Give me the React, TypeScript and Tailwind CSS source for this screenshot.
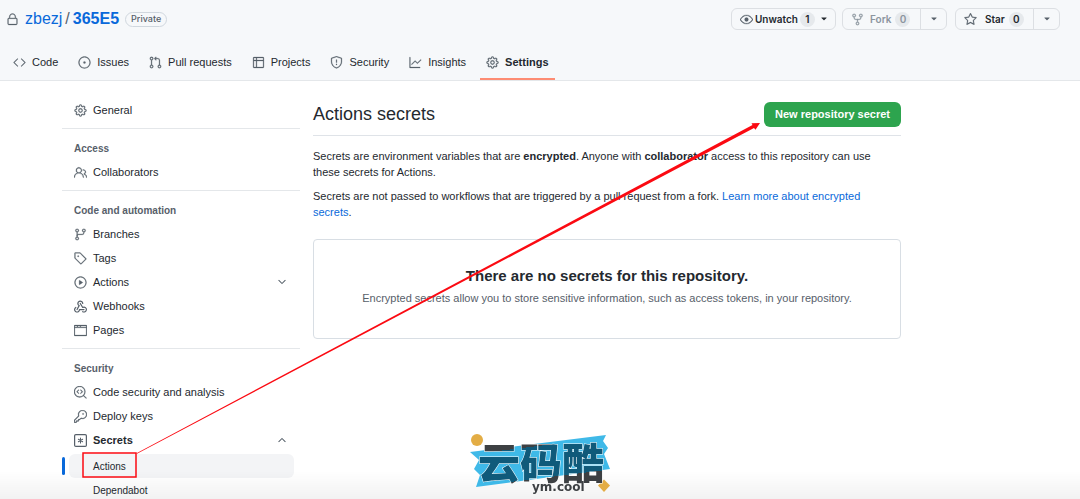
import React from 'react';
import {
  GoLock, GoCode, GoIssueOpened, GoGitPullRequest, GoTable, GoShield, GoGraph, GoGear, GoEye,
  GoRepoForked, GoStar, GoTriangleDown, GoPeople, GoGitBranch, GoTag, GoPlay,
  GoBrowser, GoCodescan, GoKey, GoChevronDown, GoChevronUp,
} from 'react-icons/go';

const WebhookIcon = ({ className }) => (
  <svg className={className} viewBox="0 0 16 16" fill="currentColor">
    <path d="M5.5 4.25a2.25 2.25 0 0 1 4.5 0 .75.75 0 0 0 1.5 0 3.75 3.75 0 1 0-6.14 2.889l-2.272 4.258a.75.75 0 0 0 1.324.706L7 7.25a.75.75 0 0 0-.309-1.015A2.25 2.25 0 0 1 5.5 4.25Z" />
    <path d="M7.364 3.607a.75.75 0 0 1 1.03.257l2.608 4.349a3.75 3.75 0 1 1-.628 6.785.75.75 0 0 1 .752-1.299 2.25 2.25 0 1 0-.033-3.88.75.75 0 0 1-1.03-.256L7.107 4.636a.75.75 0 0 1 .257-1.03Z" />
    <path d="M2.9 8.776A.75.75 0 0 1 2.625 9.8 2.25 2.25 0 1 0 6 11.75a.75.75 0 0 1 .75-.751h5.5a.75.75 0 0 1 0 1.5H7.425a3.751 3.751 0 1 1-5.55-3.998.75.75 0 0 1 1.024.274Z" />
  </svg>
);

const SecretIcon = ({ className }) => (
  <svg className={className} viewBox="0 0 16 16" fill="none" stroke="currentColor" strokeLinecap="round">
    <rect x="0.75" y="0.75" width="14.5" height="14.5" rx="1.5" strokeWidth="1.5" />
    <path d="M8 5v6M5.400 6.500l5.200 3M10.600 6.500l-5.200 3" strokeWidth="1.3" />
  </svg>
);

const tabs = [
  { name: 'Code', icon: GoCode },
  { name: 'Issues', icon: GoIssueOpened },
  { name: 'Pull requests', icon: GoGitPullRequest },
  { name: 'Projects', icon: GoTable },
  { name: 'Security', icon: GoShield },
  { name: 'Insights', icon: GoGraph },
  { name: 'Settings', icon: GoGear, active: true },
];

const sections = [
  { title: '', items: [{ name: 'General', icon: GoGear }] },
  { title: 'Access', items: [{ name: 'Collaborators', icon: GoPeople }] },
  {
    title: 'Code and automation',
    items: [
      { name: 'Branches', icon: GoGitBranch },
      { name: 'Tags', icon: GoTag },
      { name: 'Actions', icon: GoPlay, chevron: GoChevronDown },
      { name: 'Webhooks', icon: WebhookIcon },
      { name: 'Pages', icon: GoBrowser },
    ],
  },
  {
    title: 'Security',
    items: [
      { name: 'Code security and analysis', icon: GoCodescan },
      { name: 'Deploy keys', icon: GoKey },
      { name: 'Secrets', icon: SecretIcon, chevron: GoChevronUp, bold: true },
    ],
  },
];

const Count = ({ children }) => (
  <span className="flex h-[15px] min-w-[15px] items-center justify-center rounded-full bg-[#e6e9ec] px-1">{children}</span>
);

const SplitButton = ({ icon: Icon, name, disabled = false }) => (
  <div className="flex h-[22px] rounded-md border border-[#dcdfe3] text-[10px] font-semibold">
    <button
      disabled={disabled}
      className={`flex w-[78px] items-center border-r border-[#dcdfe3] pl-2 ${disabled ? 'text-[#8c959f]' : 'text-[#24292f]'}`}
    >
      <Icon className={`h-[13px] w-[13px] stroke-[0.5] ${disabled ? 'mr-1.5 text-[#8c959f]' : 'mr-2 text-[#57606a]'}`} />
      <span className="mr-1">{name}</span>
      <Count>0</Count>
    </button>
    <button aria-label={`${name} options`} className="flex w-[25px] items-center justify-center text-[#57606a]">
      <GoTriangleDown className="h-2.5 w-2.5" />
    </button>
  </div>
);

const Header = () => (
  <header className="border-b border-[#e4e7ea] bg-[#f6f8fa]">
    <div className="flex items-start justify-between pt-2 pr-5 pl-1.5">
      <div className="flex h-[22px] items-center">
        <GoLock className="mr-1.5 h-[13px] w-[13px] stroke-[0.5] text-[#57606a]" />
        <a href="#" className="text-base text-[#0969da]">zbezj</a>
        <span className="mx-[3px] text-base text-[#57606a]">/</span>
        <a href="#" className="text-base font-bold text-[#0969da]">365E5</a>
        <span className="ml-1.5 flex h-[15px] items-center rounded-full border border-[#d0d7de] px-[5px] font-['Inter',sans-serif] text-[9px] font-medium text-[#57606a]">
          Private
        </span>
      </div>
      <div className="flex font-['Inter',sans-serif]">
        <button className="mr-1.5 flex h-[22px] w-[105px] items-center rounded-md border border-[#dcdfe3] pl-2 text-[10px] font-semibold text-[#24292f]">
          <GoEye className="mr-0.5 h-[13px] w-[13px] stroke-[0.5] text-[#57606a]" />
          <span className="mr-0.5">Unwatch</span>
          <Count>1</Count>
          <GoTriangleDown className="ml-1 h-2.5 w-2.5" />
        </button>
        <div className="mr-2">
          <SplitButton icon={GoRepoForked} name="Fork" disabled />
        </div>
        <SplitButton icon={GoStar} name="Star" />
      </div>
    </div>
    <nav className="mt-3.5 flex gap-2 pl-[7px]">
      {tabs.map(({ name, icon: Icon, active }) => (
        <a
          key={name}
          href="#"
          className={`flex h-9 items-center gap-1.5 border-b-2 px-1.5 pt-0.5 text-[11px] text-[#24292f] ${
            active ? 'border-[#fd8c73] font-semibold' : 'border-transparent'
          }`}
        >
          <Icon className="h-[13px] w-[13px] stroke-[0.5] text-[#57606a]" />
          {name}
        </a>
      ))}
    </nav>
  </header>
);

const Sidebar = () => (
  <aside className="w-[238px] shrink-0 pt-[17px] text-[11px] text-[#24292f]">
    {sections.map((section, index) => (
      <div key={index} className={index > 0 ? 'border-t border-[#e4e7ea] pt-[7px]' : ''}>
        {section.title && (
          <h3 className="flex h-6 items-center pl-3 text-[10px] font-semibold text-[#57606a]">{section.title}</h3>
        )}
        <ul className="pb-1.5">
          {section.items.map(({ name, icon: Icon, chevron: Chevron, bold }) => (
            <li key={name}>
              <a href="#" className={`flex h-6 items-center px-3 ${bold ? 'font-semibold' : ''}`}>
                <Icon className="mr-1.5 h-[13px] w-[13px] stroke-[0.5] text-[#57606a]" />
                {name}
                {Chevron && <Chevron className="ml-auto h-3 w-3 stroke-[0.5] text-[#57606a]" />}
              </a>
              {bold && (
                <ul className="mt-0.5 text-[10px]">
                  <li className="flex items-center gap-1">
                    <span className="h-[18px] w-[3px] rounded-full bg-[#0969da]" />
                    <a href="#" className="mr-1.5 flex h-6 flex-1 items-center rounded-md bg-[#f3f4f6] pl-6">Actions</a>
                  </li>
                  <li>
                    <a href="#" className="flex h-6 items-center pl-[31px]">Dependabot</a>
                  </li>
                </ul>
              )}
            </li>
          ))}
        </ul>
      </div>
    ))}
  </aside>
);

const Watermark = () => (
  <svg className="absolute top-[425px] left-[460px]" width="160" height="74" viewBox="0 0 160 74">
    <defs>
      <linearGradient id="ink" gradientUnits="userSpaceOnUse" x1="78" y1="21" x2="82" y2="53">
        <stop offset="0" stopColor="#3d4043" />
        <stop offset="0" stopColor="#105a7a" />
        <stop offset="1" stopColor="#105a7a" />
        <stop offset="1" stopColor="#3d4043" />
      </linearGradient>
    </defs>
    <circle cx="17" cy="15" r="6" fill="#e3ad45" />
    <path d="M10 27L146 10L143 16L148 23L144 29L150 44L16 62L20 50L14 44L19 35Z" fill="#3fb9e8" />
    <path d="M144 54.500L150 60.500L144 67L138 60.500Z" fill="#e3ad45" />
    <text
      x="18"
      y="54"
      fill="url(#ink)"
      stroke="#ffffff"
      strokeWidth="1"
      paintOrder="stroke"
      className="font-['Noto_Sans_CJK_SC',sans-serif] text-[42px] font-black"
    >
      云码酷
    </text>
    <text x="72" y="66" fill="#3d4043" className="font-['DejaVu_Sans',sans-serif] text-[12px] font-bold">ym.cool</text>
  </svg>
);

const Annotations = () => (
  <div className="pointer-events-none absolute inset-0 overflow-hidden">
    <svg className="absolute top-0 left-0" width="1080" height="499" viewBox="0 0 1080 499" fill="#fb0a12">
      <path d="M136.500 453.200L752.500 125L751.500 123.200L760 123L755.500 129.800L754 128L137 453.800Z" />
      <rect x="83" y="453" width="53" height="24" fill="none" stroke="#fb0a12" strokeWidth="1.500" />
    </svg>
    <Watermark />
  </div>
);

const App = () => {
  return (
    <div className="relative min-h-screen bg-white font-['Liberation_Sans',sans-serif] text-[#24292f]">
      <Header />
      <div className="flex gap-[13px] px-[62px]">
        <Sidebar />
        <main className="max-w-[588px] flex-1 pt-[21px]">
          <div className="flex h-[34px] items-start justify-between border-b border-[#dfe3e8]">
            <h2 className="text-lg leading-6">Actions secrets</h2>
            <button className="h-[25px] rounded-md bg-[#2da44e] px-[11px] text-[11px] font-semibold text-white">
              New repository secret
            </button>
          </div>
          <p className="mt-3 pr-4 text-[11px] leading-4">
            Secrets are environment variables that are <strong className="font-semibold">encrypted</strong>. Anyone with{' '}
            <strong className="font-semibold">collaborator</strong> access to this repository can use these secrets for Actions.
          </p>
          <p className="mt-2 pr-4 text-[11px] leading-4">
            Secrets are not passed to workflows that are triggered by a pull request from a fork.{' '}
            <a href="#" className="text-[#0969da]">Learn more about encrypted secrets</a>.
          </p>
          <div className="mt-[19px] rounded border border-[#d8dee4] px-6 pt-6 pb-8 text-center">
            <h3 className="text-[15px] leading-6 font-semibold">There are no secrets for this repository.</h3>
            <p className="mt-0.5 text-[11px] leading-4 text-[#57606a]">
              Encrypted secrets allow you to store sensitive information, such as access tokens, in your repository.
            </p>
          </div>
        </main>
      </div>
      <div className="pointer-events-none fixed inset-x-0 bottom-0 h-7 bg-linear-to-b from-transparent to-black/5" />
      <Annotations />
    </div>
  );
};

export default App;
